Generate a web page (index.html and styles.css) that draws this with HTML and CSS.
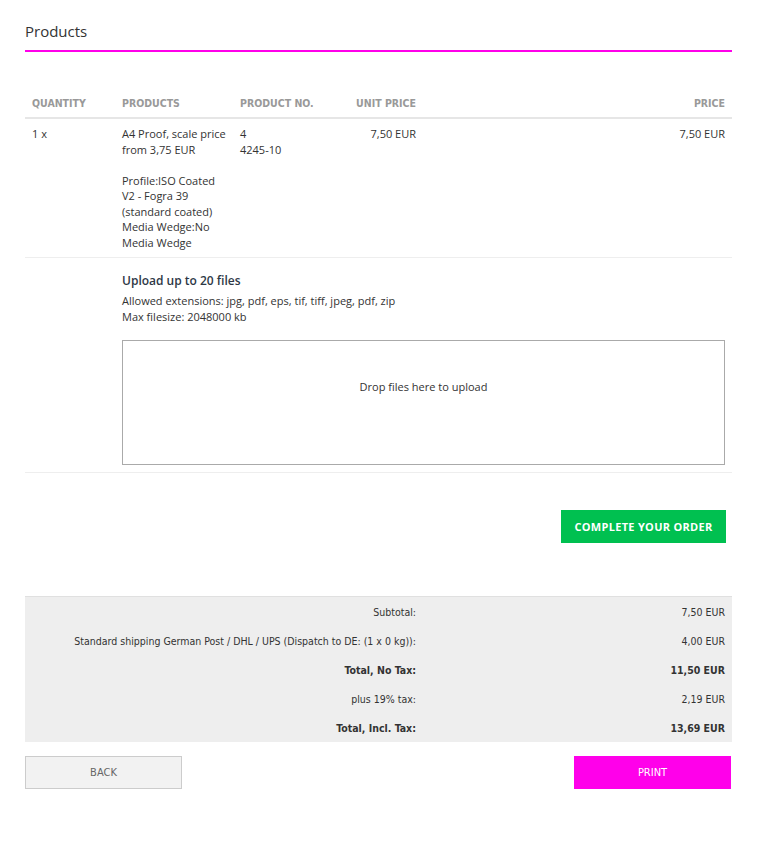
FILE: index.html
```html
<!DOCTYPE html>
<html>
<head>
<meta charset="utf-8">
<link rel="stylesheet" href="styles.css">
</head>
<body>
<div class="page">
  <h1 class="title">Products</h1>
  <div class="faint">&nbsp;</div>
  <table class="products">
    <colgroup>
      <col class="c-qty"><col class="c-prod"><col class="c-no"><col class="c-unit"><col class="c-price">
    </colgroup>
    <thead>
      <tr>
        <th>Quantity</th>
        <th>Products</th>
        <th>Product No.</th>
        <th class="r">Unit Price</th>
        <th class="r">Price</th>
      </tr>
    </thead>
    <tbody>
      <tr class="item">
        <td>1 x</td>
        <td>A4 Proof, scale price from 3,75 EUR<br><br>Profile:ISO Coated V2 - Fogra 39 (standard coated)<br>Media Wedge:No Media Wedge</td>
        <td>4<br>4245-10</td>
        <td class="r">7,50 EUR</td>
        <td class="r">7,50 EUR</td>
      </tr>
      <tr class="upload">
        <td></td>
        <td colspan="4">
          <div class="up-title">Upload up to 20 files</div>
          <div class="up-info">Allowed extensions: jpg, pdf, eps, tif, tiff, jpeg, pdf, zip<br>Max filesize: 2048000 kb</div>
          <div class="dropzone"><span>Drop files here to upload</span></div>
        </td>
      </tr>
    </tbody>
  </table>
  <div class="actions">
    <button class="btn-complete">Complete your order</button>
  </div>
  <div class="totals">
    <div class="trow"><span class="tl">Subtotal:</span><span class="tv">7,50 EUR</span></div>
    <div class="trow"><span class="tl">Standard shipping German Post / DHL / UPS (Dispatch to DE: (1 x 0 kg)):</span><span class="tv">4,00 EUR</span></div>
    <div class="trow b"><span class="tl">Total, No Tax:</span><span class="tv">11,50 EUR</span></div>
    <div class="trow"><span class="tl">plus 19% tax:</span><span class="tv">2,19 EUR</span></div>
    <div class="trow b"><span class="tl">Total, Incl. Tax:</span><span class="tv">13,69 EUR</span></div>
  </div>
  <div class="bottom">
    <button class="btn-back">Back</button>
    <button class="btn-print">Print</button>
  </div>
</div>
</body>
</html>
```
FILE: styles.css
```css
* { box-sizing: border-box; }
html, body { margin: 0; padding: 0; background: #fff; }
body {
  font-family: "Open Sans", "DejaVu Sans", sans-serif;
  font-size: 11px;
  color: #333;
}
.page {
  width: 707px;
  margin-left: 25px;
  padding-top: 20px;
}
.title {
  margin: 0;
  font-family: "Open Sans", sans-serif;
  font-weight: 400;
  font-size: 15px;
  line-height: 22px;
  color: #333;
  padding-bottom: 8px;
  border-bottom: 2px solid #ff00ea;
}
.faint {
  height: 20px;
  margin-top: 17px;
}
.products {
  width: 707px;
  border-collapse: collapse;
  table-layout: fixed;
}
.c-qty { width: 90px; }
.c-prod { width: 118px; }
.c-no { width: 107px; }
.c-unit { width: 83px; }
.c-price { width: 309px; }
.products th {
  font-family: "DejaVu Sans Condensed", "DejaVu Sans", sans-serif;
  font-stretch: condensed;
  font-weight: 700;
  font-size: 10.5px;
  color: #999;
  text-transform: uppercase;
  text-align: left;
  padding: 7px 7px 6px;
  line-height: 15px;
  border-bottom: 2px solid #e6e6e6;
}
.products .r { text-align: right; }
.products td {
  vertical-align: top;
  padding: 7px 7px;
  line-height: 15.5px;
  border-bottom: 1px solid #eee;
}
.upload td { padding-top: 14px; padding-bottom: 7px; }
.up-title {
  font-weight: 600;
  font-size: 12px;
  color: #2e3846;
  line-height: 17px;
}
.up-info {
  margin-top: 4px;
  line-height: 15.5px;
}
.dropzone {
  margin-top: 16px;
  height: 125px;
  border: 1px solid #aaa;
  display: flex;
  justify-content: center;
  padding-top: 38px;
}
.actions {
  display: flex;
  justify-content: flex-end;
  padding: 37px 6px 0 0;
  height: 123px;
}
button { font: inherit; cursor: pointer; }
.btn-complete {
  background: #00c050;
  color: #fff;
  border: none;
  height: 33px;
  width: 165px;
  font-weight: 700;
  font-size: 11px;
  letter-spacing: 0.3px;
  text-transform: uppercase;
}
.totals {
  background: #eee;
  border-top: 1px solid #e0e0e0;
  padding: 0;
}
.trow {
  display: flex;
  height: 29px;
  align-items: center;
  font-family: "DejaVu Sans Condensed", "DejaVu Sans", sans-serif;
  font-stretch: condensed;
  font-size: 10.5px;
  color: #333;
}
.trow .tl { width: 391px; text-align: right; }
.trow .tv { flex: 1; text-align: right; padding-right: 7px; }
.trow.b { font-weight: 700; }
.bottom {
  display: flex;
  justify-content: space-between;
  margin-top: 14px;
  padding-right: 1px;
}
.bottom button {
  width: 157px;
  height: 33px;
  font-family: "DejaVu Sans Condensed", "DejaVu Sans", sans-serif;
  font-stretch: condensed;
  font-size: 11px;
  text-transform: uppercase;
}
.btn-back {
  background: #f2f2f2;
  border: 1px solid #ccc;
  color: #666;
}
.btn-print {
  background: #ff00ea;
  border: none;
  color: #fff;
}
```
